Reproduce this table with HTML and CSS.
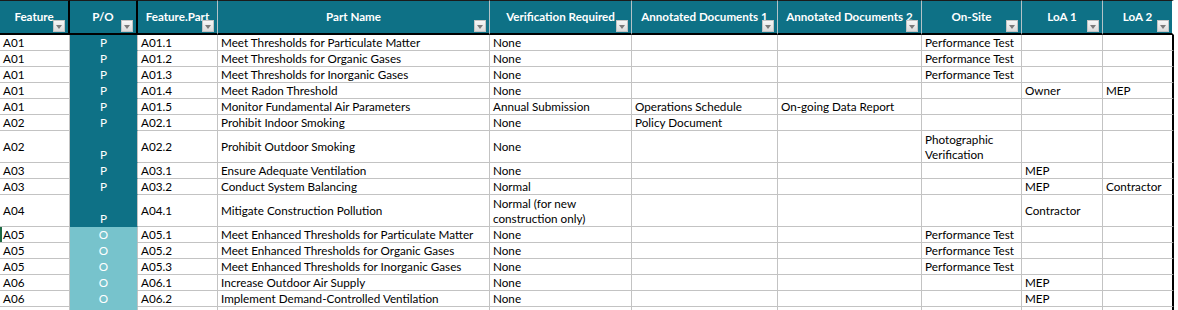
FILE: index.html
```html
<!DOCTYPE html>
<html>
<head>
<meta charset="utf-8">
<link rel="stylesheet" href="styles.css">
</head>
<body>
<div class="sheet">
  <div class="row head">
    <div class="h dark-sep">Feature<span class="dd"></span></div>
    <div class="h dark-sep">P/O<span class="dd"></span></div>
    <div class="h">Feature.Part<span class="dd"></span></div>
    <div class="h">Part Name<span class="dd"></span></div>
    <div class="h">Verification Required<span class="dd"></span></div>
    <div class="h">Annotated Documents 1<span class="dd"></span></div>
    <div class="h">Annotated Documents 2<span class="dd"></span></div>
    <div class="h">On-Site<span class="dd"></span></div>
    <div class="h">LoA 1<span class="dd"></span></div>
    <div class="h last">LoA 2<span class="dd"></span></div>
  </div>

  <div class="row">
    <div class="c">A01</div><div class="c po p">P</div><div class="c">A01.1</div><div class="c">Meet Thresholds for Particulate Matter</div><div class="c">None</div><div class="c"></div><div class="c"></div><div class="c">Performance Test</div><div class="c"></div><div class="c last"></div>
  </div>
  <div class="row">
    <div class="c">A01</div><div class="c po p">P</div><div class="c">A01.2</div><div class="c">Meet Thresholds for Organic Gases</div><div class="c">None</div><div class="c"></div><div class="c"></div><div class="c">Performance Test</div><div class="c"></div><div class="c last"></div>
  </div>
  <div class="row">
    <div class="c">A01</div><div class="c po p">P</div><div class="c">A01.3</div><div class="c">Meet Thresholds for Inorganic Gases</div><div class="c">None</div><div class="c"></div><div class="c"></div><div class="c">Performance Test</div><div class="c"></div><div class="c last"></div>
  </div>
  <div class="row">
    <div class="c">A01</div><div class="c po p">P</div><div class="c">A01.4</div><div class="c">Meet Radon Threshold</div><div class="c">None</div><div class="c"></div><div class="c"></div><div class="c"></div><div class="c">Owner</div><div class="c last">MEP</div>
  </div>
  <div class="row">
    <div class="c">A01</div><div class="c po p">P</div><div class="c">A01.5</div><div class="c">Monitor Fundamental Air Parameters</div><div class="c">Annual Submission</div><div class="c">Operations Schedule</div><div class="c">On-going Data Report</div><div class="c"></div><div class="c"></div><div class="c last"></div>
  </div>
  <div class="row">
    <div class="c">A02</div><div class="c po p">P</div><div class="c">A02.1</div><div class="c">Prohibit Indoor Smoking</div><div class="c">None</div><div class="c">Policy Document</div><div class="c"></div><div class="c"></div><div class="c"></div><div class="c last"></div>
  </div>
  <div class="row tall">
    <div class="c">A02</div><div class="c po p">P</div><div class="c">A02.2</div><div class="c">Prohibit Outdoor Smoking</div><div class="c">None</div><div class="c"></div><div class="c"></div><div class="c">Photographic Verification</div><div class="c"></div><div class="c last"></div>
  </div>
  <div class="row">
    <div class="c">A03</div><div class="c po p">P</div><div class="c">A03.1</div><div class="c">Ensure Adequate Ventilation</div><div class="c">None</div><div class="c"></div><div class="c"></div><div class="c"></div><div class="c">MEP</div><div class="c last"></div>
  </div>
  <div class="row">
    <div class="c">A03</div><div class="c po p">P</div><div class="c">A03.2</div><div class="c">Conduct System Balancing</div><div class="c">Normal</div><div class="c"></div><div class="c"></div><div class="c"></div><div class="c">MEP</div><div class="c last">Contractor</div>
  </div>
  <div class="row tall">
    <div class="c">A04</div><div class="c po p">P</div><div class="c">A04.1</div><div class="c">Mitigate Construction Pollution</div><div class="c">Normal (for new construction only)</div><div class="c"></div><div class="c"></div><div class="c"></div><div class="c">Contractor</div><div class="c last"></div>
  </div>
  <div class="row">
    <div class="c active">A05</div><div class="c po o">O</div><div class="c">A05.1</div><div class="c">Meet Enhanced Thresholds for Particulate Matter</div><div class="c">None</div><div class="c"></div><div class="c"></div><div class="c">Performance Test</div><div class="c"></div><div class="c last"></div>
  </div>
  <div class="row">
    <div class="c">A05</div><div class="c po o">O</div><div class="c">A05.2</div><div class="c">Meet Enhanced Thresholds for Organic Gases</div><div class="c">None</div><div class="c"></div><div class="c"></div><div class="c">Performance Test</div><div class="c"></div><div class="c last"></div>
  </div>
  <div class="row">
    <div class="c">A05</div><div class="c po o">O</div><div class="c">A05.3</div><div class="c">Meet Enhanced Thresholds for Inorganic Gases</div><div class="c">None</div><div class="c"></div><div class="c"></div><div class="c">Performance Test</div><div class="c"></div><div class="c last"></div>
  </div>
  <div class="row">
    <div class="c">A06</div><div class="c po o">O</div><div class="c">A06.1</div><div class="c">Increase Outdoor Air Supply</div><div class="c">None</div><div class="c"></div><div class="c"></div><div class="c"></div><div class="c">MEP</div><div class="c last"></div>
  </div>
  <div class="row">
    <div class="c">A06</div><div class="c po o">O</div><div class="c">A06.2</div><div class="c">Implement Demand-Controlled Ventilation</div><div class="c">None</div><div class="c"></div><div class="c"></div><div class="c"></div><div class="c">MEP</div><div class="c last"></div>
  </div>
  <div class="row">
    <div class="c"></div><div class="c po o"></div><div class="c"></div><div class="c"></div><div class="c"></div><div class="c"></div><div class="c"></div><div class="c"></div><div class="c"></div><div class="c last"></div>
  </div>
</div>
</body>
</html>
```

FILE: styles.css
```css
html, body {
  margin: 0;
  padding: 0;
  background: #fff;
  overflow: hidden;
}
body {
  font-family: Lato, "Open Sans", "Liberation Sans", sans-serif;
  font-size: 11.7px;
  color: #000;
}
.sheet {
  display: grid;
  grid-template-columns: 70px 68px 80px 272px 142px 146px 144px 100px 81px 71px;
  width: 1174px;
}
.row {
  display: contents;
}
.h {
  position: relative;
  box-sizing: border-box;
  height: 35px;
  background: #0e7186;
  color: #fff;
  font-weight: 700;
  font-size: 11.6px;
  border-top: 1px solid #1b1b1b;
  border-bottom: 2px solid #000;
  border-right: 1px solid #b4c3c7;
  display: flex;
  align-items: center;
  justify-content: center;
  white-space: nowrap;
  overflow: hidden;
  padding-bottom: 1px;
}
.h.dark-sep {
  border-right: 2px solid #000;
}
.h.last {
  border-right: 2px solid #fff;
}
.dd {
  position: absolute;
  right: 3px;
  bottom: 1px;
  width: 12px;
  height: 12px;
  box-sizing: border-box;
  background: linear-gradient(#f7f7f7, #dcdcdc);
  border: 1px solid #c4c4c4;
}
.dd::after {
  content: "";
  position: absolute;
  left: 2px;
  top: 4px;
  border-left: 3px solid transparent;
  border-right: 3px solid transparent;
  border-top: 4px solid #7a7a7a;
}
.c {
  box-sizing: border-box;
  height: 16px;
  border-right: 1px solid #c3c3c3;
  border-bottom: 1px solid #c3c3c3;
  padding: 0 3px;
  display: flex;
  align-items: center;
  line-height: 15px;
  white-space: normal;
  overflow: hidden;
}
.tall .c {
  height: 32px;
}
.c.last {
  border-right: 2px solid #000;
}
.c.active {
  box-shadow: inset 2px 0 0 #1d6b44;
}
.po {
  justify-content: center;
  color: #fff;
}
.po.p {
  background: #0e7186;
  border-bottom-color: #0e7186;
}
.po.o {
  background: #77c3cc;
  border-bottom-color: #77c3cc;
}
.tall .po {
  align-items: flex-end;
  padding-bottom: 0;
}
```
